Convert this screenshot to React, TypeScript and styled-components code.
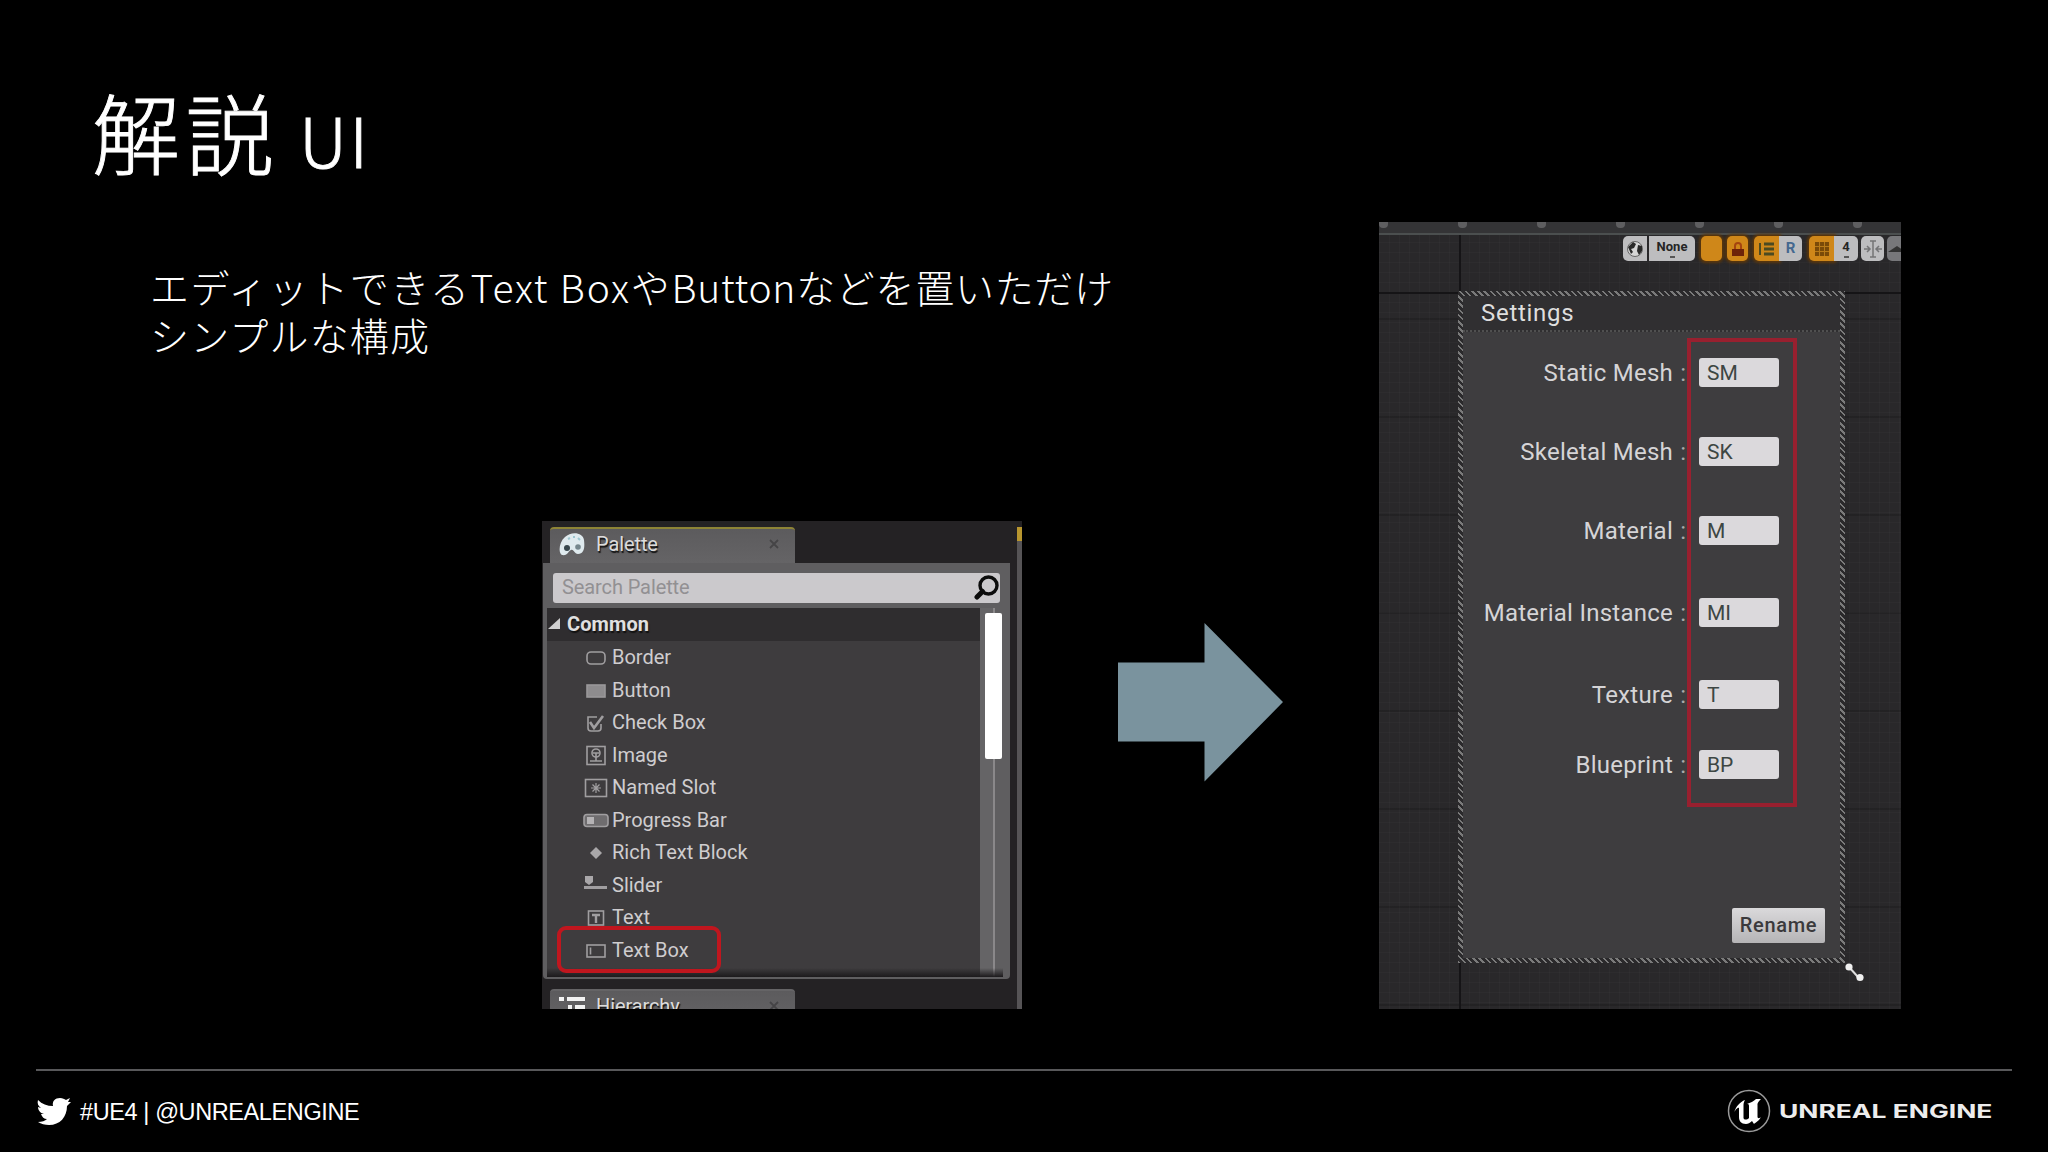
import React from "react";
import styled, { createGlobalStyle, css } from "styled-components";

const Global = createGlobalStyle`
  * { box-sizing: border-box; }
  html, body { margin: 0; background: #000; }
  body { overflow: hidden; }
`;

const Slide = styled.div`
  width: 2048px;
  height: 1152px;
  display: flex;
  flex-direction: column;
  background: #000;
  color: #fff;
  font-family: Roboto, "Liberation Sans", sans-serif;
  overflow: hidden;
`;
const Main = styled.main`
  height: 1069px;
  flex: none;
  display: flex;
  align-items: flex-start;
`;
const LeftColumn = styled.div`
  width: 1379px;
  flex: none;
  display: flex;
  flex-direction: column;
`;
const Title = styled.h1`
  margin: 70px 0 0 92px;
  height: 120px;
  line-height: 120px;
  font-family: "Noto Sans CJK JP", sans-serif;
  font-weight: 300;
  font-size: 88px;
  letter-spacing: 5.5px;
  -webkit-text-stroke: 0.9px #fff;
  white-space: nowrap;
  display: flex;
  align-items: baseline;
`;
const TitleLatin = styled.span`
  font-size: 68px;
  letter-spacing: 2.5px;
  margin-left: 20px;
`;
const Copy = styled.div`
  margin: 72px 0 0 150px;
  height: 259px;
  font-family: "Noto Sans CJK JP", sans-serif;
  font-weight: 300;
  font-size: 39px;
  line-height: 48px;
  white-space: nowrap;
`;
const Run = styled.span<{ $track: number }>`
  letter-spacing: ${(p) => p.$track}px;
`;
const Figures = styled.div`
  display: flex;
  align-items: flex-start;
  padding-left: 542px;
`;
const ArrowSvg = styled.svg`
  display: block;
  margin: 102px 0 0 96px;
`;

/* Palette panel */
const Palette = styled.section`
  width: 480px;
  height: 488px;
  display: flex;
  background: #242224;
  overflow: hidden;
`;
const PaletteBody = styled.div`
  width: 469px;
  display: flex;
  flex-direction: column;
  padding: 6px 0 0 1px;
`;
const Tab = styled.div<{ $active?: boolean }>`
  width: 245px;
  height: 36px;
  flex: none;
  margin-left: 7px;
  padding: 0 16px 4px 9px;
  display: flex;
  align-items: center;
  background: linear-gradient(#5c5b5d, #656466);
  border-top: 2px solid ${(p) => (p.$active ? "#8e8436" : "#656466")};
  border-radius: 4px 4px 0 0;
  color: #dcdcdc;
  font-size: 20px;
  text-shadow: 1px 2px 1px #111;
`;
const TabLabel = styled.span`
  margin-left: 11px;
  flex: 1;
  letter-spacing: -0.1px;
`;
const PalettePane = styled.div`
  width: 467px;
  height: 416px;
  flex: none;
  padding: 10px 2px 2px 4px;
  background: #5f5e60;
  border-radius: 0 0 4px 4px;
`;
const Search = styled.div`
  margin: 0 8px 5px 6px;
  height: 30px;
  display: flex;
  align-items: center;
  justify-content: space-between;
  padding: 0 0 2px 9px;
  background: #cbc9cc;
  border-radius: 3px;
  color: #929093;
  font-size: 20px;
  letter-spacing: -0.1px;
`;
const ListArea = styled.div`
  position: relative;
  display: flex;
  height: 369px;
  background: #3e3c3e;
`;
const List = styled.div`
  width: 433px;
  flex: none;
`;
const GroupRow = styled.div`
  height: 33px;
  display: flex;
  align-items: center;
  gap: 7px;
  padding: 0 0 2px 1px;
  background: #2f2d2f;
  color: #e0e0e0;
  font-weight: 700;
  font-size: 20px;
  letter-spacing: 0.1px;
  text-shadow: 1px 2px 1px #111;
`;
const Item = styled.div`
  height: 32.5px;
  display: flex;
  align-items: center;
  padding-left: 36px;
  color: #cfcdcf;
  font-size: 20px;
`;
const ItemIcon = styled.svg`
  width: 26px;
  height: 22px;
  margin-right: 3px;
  fill: none;
  stroke: #a09ea0;
  stroke-width: 1.6;
`;
const ScrollTrack = styled.div`
  flex: 1;
  padding: 5px 0 0 5px;
  background: linear-gradient(90deg, #656466 13px, #8a888a 13px, #8a888a 15px, #5f5e60 15px);
`;
const ScrollThumb = styled.div`
  width: 17px;
  height: 146px;
  background: #fff;
  border-radius: 2px;
`;
const BottomShade = styled.div`
  position: absolute;
  left: 0;
  right: 5px;
  bottom: 0;
  height: 9px;
  background: linear-gradient(rgba(20, 18, 20, 0), #1c1a1c);
`;
const ItemHighlight = styled.div`
  position: absolute;
  left: 10px;
  top: 318px;
  width: 164px;
  height: 47px;
  border: 4px solid #c0161e;
  border-radius: 9px;
  z-index: 1;
`;
const EdgeStrip = styled.div`
  width: 5px;
  margin: 6px 0 0 6px;
  background: linear-gradient(#b8962f 14px, #565456 14px);
`;
const TabSpacer = styled.div`
  height: 10px;
  flex: none;
`;

/* Designer panel */
const Designer = styled.section`
  width: 522px;
  height: 787px;
  margin-top: 222px;
  flex: none;
  overflow: hidden;
  position: relative;
  background:
    linear-gradient(#151416, #151416) 80px 12px / 2px 100% no-repeat,
    linear-gradient(#151416, #151416) 0 70px / 100% 2px no-repeat,
    repeating-linear-gradient(90deg, rgba(255, 255, 255, 0.02) 0 1px, transparent 1px 10px),
    repeating-linear-gradient(rgba(255, 255, 255, 0.02) 0 1px, transparent 1px 10px),
    repeating-linear-gradient(transparent 0 96px, rgba(10, 10, 10, 0.2) 96px 98px),
    #29282a;
`;
const Ruler = styled.div`
  height: 13px;
  border-bottom: 2px solid #4b4f4f;
  background: #343436;
  display: flex;
  gap: 70px;
`;
const RulerMark = styled.i`
  width: 9px;
  height: 6px;
  flex: none;
  border-radius: 0 0 4px 4px;
  background: #5e5e60;
`;
const Toolbar = styled.div`
  display: flex;
  height: 27px;
  padding: 1px 0 1px 244px;
  align-items: stretch;
`;
const ToolButton = styled.div<{ $w: number; $gap?: number; $tone?: "orange" | "dim"; $side?: "l" | "r" }>`
  width: ${(p) => p.$w}px;
  margin-left: ${(p) => p.$gap ?? 0}px;
  flex: none;
  display: flex;
  flex-direction: column;
  align-items: center;
  justify-content: center;
  border-radius: ${(p) => (p.$side === "l" ? "5px 0 0 5px" : p.$side === "r" ? "0 5px 5px 0" : "5px")};
  background: ${(p) => (p.$tone === "orange" ? "#cf8719" : p.$tone === "dim" ? "#77777a" : "#bdbdbf")};
  ${(p) =>
    p.$tone === "orange" &&
    css`
      box-shadow: 0 0 3px 2px #5c370b;
    `}
  color: #252525;
  font-size: 13px;
  line-height: 13px;
  font-weight: 700;
`;
const Caret = styled.i`
  width: 5px;
  height: 2px;
  margin-top: 3px;
  background: #555;
`;
const RText = styled.span`
  font-size: 15px;
  color: #45688f;
`;
const Window = styled.div`
  position: relative;
  margin: 29px 0 0 79px;
  width: 387px;
  height: 672px;
  padding: 5px;
  background: repeating-linear-gradient(45deg, #7a7a7a 0 1.8px, #2a292b 1.8px 4.4px);
`;
const WindowInner = styled.div`
  height: 100%;
  display: flex;
  flex-direction: column;
  background: #3e3d3f;
`;
const WindowTitle = styled.div`
  height: 36px;
  flex: none;
  display: flex;
  align-items: center;
  padding: 0 0 1px 18px;
  background: #302f31;
  border-bottom: 2px dotted #505050;
  color: #dedede;
  font-size: 24px;
  letter-spacing: 0.7px;
`;
const Field = styled.div<{ $before: number }>`
  height: 29px;
  flex: none;
  margin-top: ${(p) => p.$before}px;
  display: flex;
  align-items: center;
  color: #d5d4d6;
  font-size: 24px;
`;
const FieldLabel = styled.label`
  width: 210px;
  text-align: right;
  white-space: nowrap;
  letter-spacing: 0.25px;
`;
const Colon = styled.span`
  width: 13px;
  text-align: right;
  color: #aaa;
`;
const FieldBox = styled.div`
  width: 80px;
  height: 29px;
  margin-left: 13px;
  padding: 1px 0 0 8px;
  line-height: 29px;
  border-radius: 3px;
  background: #dbd9dc;
  color: #3d4643;
  font-size: 21px;
`;
const WindowActions = styled.div`
  display: flex;
  justify-content: flex-end;
  padding: 129px 15px 0 0;
`;
const RenameButton = styled.button`
  width: 93px;
  height: 35px;
  padding: 0 0 1px;
  border: 0;
  background: linear-gradient(#dad9db, #b5b4b6);
  border-radius: 2px;
  color: #3b3a3c;
  font-family: inherit;
  font-size: 20px;
  font-weight: 500;
  letter-spacing: 0.7px;
`;
const FieldsHighlight = styled.div`
  position: absolute;
  left: 229px;
  top: 47px;
  width: 110px;
  height: 469px;
  border: 4px solid #98202f;
`;
const ResizeHandle = styled.svg`
  position: absolute;
  left: 386px;
  top: 671px;
`;

/* Footer */
const Footer = styled.footer`
  margin: 0 36px;
  height: 83px;
  border-top: 2px solid #58585a;
  display: flex;
  justify-content: space-between;
  align-items: flex-start;
`;
const Social = styled.div`
  display: flex;
  align-items: center;
  margin-top: 22px;
  height: 38px;
  font-family: "Liberation Sans", Arial, sans-serif;
  font-size: 23.5px;
`;
const Handle = styled.span`
  margin-left: 8px;
  white-space: nowrap;
  letter-spacing: -0.4px;
`;
const Brand = styled.div`
  display: flex;
  align-items: center;
  width: 285px;
  margin-top: 17px;
  height: 46px;
`;
const BrandName = styled.span`
  margin: 1px 0 0 8px;
  font-family: Inter, sans-serif;
  font-weight: 700;
  font-size: 19px;
  color: #ececec;
  white-space: nowrap;
  transform: scaleX(1.39);
  transform-origin: 0 50%;
`;

const icons: Record<string, React.ReactNode> = {
  Border: <rect x="4" y="6" width="18" height="12" rx="4" />,
  Button: <rect x="4" y="6" width="18" height="12" fill="#8e8c8e" stroke="#9a989a" />,
  "Check Box": (
    <>
      <path d="M14 6H5v11q0 3 3 3h7q3 0 3-3v-4" />
      <path d="M7 11l4 6L20 5" strokeWidth="2.6" />
    </>
  ),
  Image: (
    <>
      <rect x="4" y="2.500" width="18" height="18" />
      <circle cx="13" cy="9" r="4" />
      <path d="M13 9v8M7 17h12M10 9h6" />
    </>
  ),
  "Named Slot": (
    <>
      <rect x="2.500" y="3.500" width="21" height="17" />
      <path d="M13 7v10M8 12h10M9.500 8.500l7 7M16.500 8.500l-7 7" strokeWidth="1.2" />
    </>
  ),
  "Progress Bar": (
    <>
      <rect x="1" y="5.500" width="24" height="12" rx="3" fill="#6f6d6f" />
      <rect x="4" y="8" width="7" height="7" fill="#b5b3b5" stroke="none" />
    </>
  ),
  "Rich Text Block": <path d="M13 6l6 6-6 6-6-6z" fill="#a9a7a9" stroke="none" />,
  Slider: (
    <>
      <path d="M1 13.500h23" strokeWidth="3" />
      <path d="M2 2h8v6l-4 3-4-3z" fill="#a9a7a9" stroke="none" />
    </>
  ),
  Text: (
    <>
      <rect x="5.500" y="5" width="15" height="14" />
      <path d="M9 9h8M13 9v8" strokeWidth="2.400" />
    </>
  ),
  "Text Box": (
    <>
      <rect x="4" y="6" width="18" height="12" />
      <path d="M7.500 8.500v7" />
    </>
  ),
};

const fields: [string, string, number][] = [
  ["Static Mesh", "SM", 26],
  ["Skeletal Mesh", "SK", 50],
  ["Material", "M", 50],
  ["Material Instance", "MI", 53],
  ["Texture", "T", 53],
  ["Blueprint", "BP", 41],
];

const Cross = () => (
  <svg width="10" height="10" viewBox="0 0 10 10" stroke="#454446" strokeWidth="1.800">
    <path d="M1 1l8 8M9 1L1 9" />
  </svg>
);

export default function App() {
  return (
    <Slide>
      <Global />
      <Main>
        <LeftColumn>
          <Title>
            解説<TitleLatin>UI</TitleLatin>
          </Title>
          <Copy>
            <div>
              <Run $track={1.5}>エディットできる</Run>
              <Run $track={1.8}>Text Box</Run>
              <Run $track={1.8}>や</Run>
              <Run $track={0.7}>Button</Run>
              <Run $track={0.7}>などを置いただけ</Run>
            </div>
            <Run $track={1.2}>シンプルな構成</Run>
          </Copy>
          <Figures>
            <Palette>
              <PaletteBody>
                <Tab $active>
                  <svg width="26" height="24" viewBox="0 0 26 24">
                    <path
                      d="M3 23C-1 21 0 10 6 5C12-1 24 0 25 8C26 16 25 22 19 22C15 22 15 17 12 18C9 19 9 24 3 23Z"
                      fill="#dfeaee"
                    />
                    <circle cx="8" cy="16" r="3" fill="#38474d" />
                    <circle cx="19" cy="15" r="2.800" fill="#75878d" />
                    <path d="M9 7l2-1M14 5l2 0M19 6l2 2" stroke="#9cc6d0" strokeWidth="2" />
                  </svg>
                  <TabLabel>Palette</TabLabel>
                  <Cross />
                </Tab>
                <PalettePane>
                  <Search>
                    <span>Search Palette</span>
                    <svg width="26" height="26" viewBox="0 0 26 26" fill="none" stroke="#0c0c0c">
                      <circle cx="14.500" cy="11.500" r="8.500" strokeWidth="3.400" />
                      <path d="M8.500 17.500l-5.500 5.500" strokeWidth="5" strokeLinecap="round" />
                    </svg>
                  </Search>
                  <ListArea>
                    <List>
                      <GroupRow>
                        <svg width="12" height="12" viewBox="0 0 12 12">
                          <path d="M12 0v11H0z" fill="#d0d0d0" />
                        </svg>
                        Common
                      </GroupRow>
                      {Object.keys(icons).map((name) => (
                        <Item key={name}>
                          <ItemIcon viewBox="0 0 26 22">{icons[name]}</ItemIcon>
                          {name}
                        </Item>
                      ))}
                    </List>
                    <ScrollTrack>
                      <ScrollThumb />
                    </ScrollTrack>
                    <BottomShade />
                    <ItemHighlight />
                  </ListArea>
                </PalettePane>
                <TabSpacer />
                <Tab>
                  <svg width="26" height="22" viewBox="0 0 26 22" stroke="#f2f2f2" strokeWidth="4">
                    <path d="M0 4h5M8 4h18M9 12h4M16 12h10M9 20h4M16 20h10" />
                  </svg>
                  <TabLabel>Hierarchy</TabLabel>
                  <Cross />
                </Tab>
              </PaletteBody>
              <EdgeStrip />
            </Palette>
            <ArrowSvg width="166" height="160" viewBox="0 0 166 160">
              <path d="M0 39.500H86.500V0L165 79L86.500 158.500V118.500H0Z" fill="#7a939e" />
            </ArrowSvg>
          </Figures>
        </LeftColumn>
        <Designer>
          <Ruler>
            {[0, 1, 2, 3, 4, 5, 6].map((n) => (
              <RulerMark key={n} />
            ))}
          </Ruler>
          <Toolbar>
            <ToolButton $w={24} $side="l">
              <svg width="18" height="18" viewBox="0 0 18 18">
                <circle cx="9" cy="9" r="7.500" fill="#d6d6d6" stroke="#666" />
                <path d="M2 7l5-5 3 2-2 4-3 1 2 3-2 2zM12 5l4 1v5l-3 4-2-4z" fill="#2a2a2a" />
              </svg>
            </ToolButton>
            <ToolButton $w={46} $gap={2} $side="r">
              None
              <Caret />
            </ToolButton>
            <ToolButton $w={21} $gap={6} $tone="orange" />
            <ToolButton $w={21} $gap={5} $tone="orange">
              <svg width="14" height="16" viewBox="0 0 14 16">
                <path d="M4 8V5a3 3 0 016 0v3" fill="none" stroke="#a4440f" strokeWidth="2" />
                <rect x="1" y="8" width="12" height="7" fill="#6d2309" />
              </svg>
            </ToolButton>
            <ToolButton $w={25} $gap={6} $tone="orange" $side="l">
              <svg width="16" height="14" viewBox="0 0 16 14">
                <path d="M1 1v12" stroke="#4b4a22" strokeWidth="2" />
                <path d="M5 2h10M5 7h10M5 12h10" stroke="#4b4a22" strokeWidth="3" />
              </svg>
            </ToolButton>
            <ToolButton $w={23} $side="r">
              <RText>R</RText>
            </ToolButton>
            <ToolButton $w={25} $gap={7} $tone="orange" $side="l">
              <svg width="16" height="16" viewBox="0 0 16 16">
                <rect x="1" y="1" width="14" height="14" fill="#7a4a08" />
                <path d="M5.500 1v14M10.500 1v14M1 5.500h14M1 10.500h14" stroke="#b87a18" />
              </svg>
            </ToolButton>
            <ToolButton $w={24} $side="r">
              4
              <Caret />
            </ToolButton>
            <ToolButton $w={23} $gap={3}>
              <svg width="20" height="20" viewBox="0 0 20 20" stroke="#747476" strokeWidth="1.500" fill="none">
                <path d="M10 2v16M7 2h6M7 18h6M1 10h6M13 10h6M4 7l3 3-3 3M16 7l-3 3 3 3" />
              </svg>
            </ToolButton>
            <ToolButton $w={22} $gap={3} $tone="dim">
              <svg width="20" height="14" viewBox="0 0 20 14">
                <path d="M0 10l9-6 9 6z" fill="#333" />
              </svg>
            </ToolButton>
          </Toolbar>
          <Window>
            <WindowInner>
              <WindowTitle>Settings</WindowTitle>
              {fields.map(([label, value, before]) => (
                <Field key={label} $before={before}>
                  <FieldLabel>{label}</FieldLabel>
                  <Colon>:</Colon>
                  <FieldBox>{value}</FieldBox>
                </Field>
              ))}
              <WindowActions>
                <RenameButton>Rename</RenameButton>
              </WindowActions>
            </WindowInner>
            <FieldsHighlight />
            <ResizeHandle width="20" height="20" viewBox="0 0 20 20">
              <path d="M5 5l9 10" stroke="#ddd" strokeWidth="2" />
              <circle cx="5" cy="5" r="3.600" fill="#f0f0f0" />
              <circle cx="16" cy="15.500" r="3.600" fill="#f0f0f0" />
            </ResizeHandle>
          </Window>
        </Designer>
      </Main>
      <Footer>
        <Social>
          <svg width="36" height="30" viewBox="0 0 36 30">
            <path
              d="M2 3C6 7 11 9 17 9C16 4 19 1 24 1C27 1 28 2 30 3L34 1L32 5L35 5L31 9C31 20 24 28 13 28C9 28 5 27 2 25C6 25 9 24 11 22C8 22 6 20 5 17H8C4 16 2 13 2 10L5 11C2 9 1 6 2 3Z"
              fill="#fff"
            />
          </svg>
          <Handle>#UE4 | @UNREALENGINE</Handle>
        </Social>
        <Brand>
          <svg width="44" height="44" viewBox="0 0 44 44">
            <circle cx="22" cy="22" r="20.500" fill="none" stroke="#9a9a9a" strokeWidth="1.500" />
            <path
              d="M7 24C9 17 13 13 18 11C17 13 16.500 14 16.500 16V29C17 31 20 31 22 29V17C22 15 21 15 20 15C23 14 27 12 29 10L34 10C31 13 30.500 14 30.500 16V28C31 30 33 29 34 28C32 32 29 33 27 35L25 32C23 34 21 35 19 35C14 35 12 32 12 28V19C11 18 8 21 7 24Z"
              fill="#fff"
            />
          </svg>
          <BrandName>UNREAL ENGINE</BrandName>
        </Brand>
      </Footer>
    </Slide>
  );
}
